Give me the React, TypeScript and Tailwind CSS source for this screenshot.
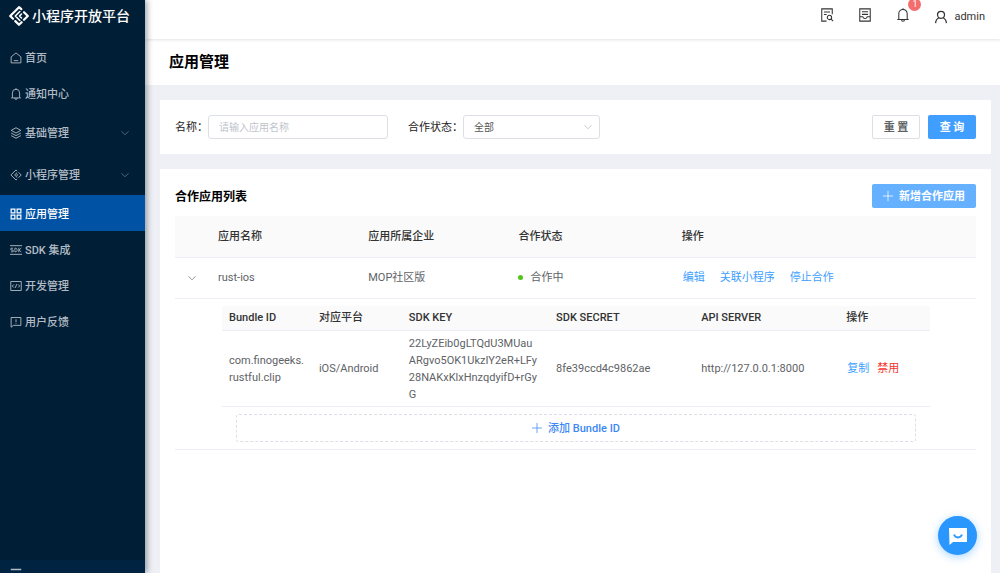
import type { ReactNode } from "react";

type IconProps = { className?: string; children: ReactNode; strokeWidth?: number };

function Icon({ className = "size-3", children, strokeWidth = 1.2 }: IconProps) {
  return (
    <svg
      viewBox="0 0 16 16"
      className={`shrink-0 ${className}`}
      fill="none"
      stroke="currentColor"
      strokeWidth={strokeWidth}
      aria-hidden="true"
    >
      {children}
    </svg>
  );
}

const chevron = <path d="M1 4.500l7 7 7-7" />;
const plus = <path d="M8 0v16M0 8h16" />;

const icons = {
  home: (
    <>
      <path d="M1.500 6.500L8 1.200l6.500 5.300V14.500H1.500z" strokeLinejoin="round" />
      <path d="M5 11.500h6" />
    </>
  ),
  bell: (
    <>
      <path d="M1.500 13.200h13M3.200 13V6.500a4.800 4.800 0 0 1 9.600 0V13" />
      <path d="M6.300 13.500a1.700 1.700 0 0 0 3.400 0M8 .3v1.500" />
    </>
  ),
  layers: (
    <>
      <path d="M8 1l6.500 3.500L8 8 1.500 4.500z" strokeLinejoin="round" />
      <path d="M1.500 8L8 11.500 14.500 8M1.500 11.500L8 15l6.500-3.500" strokeLinejoin="round" />
    </>
  ),
  program: (
    <>
      <path d="M9.500 2.500L8 1.300 1.200 8 8 14.700l1.500-1.200M11.500 4.500L14.900 8l-3.400 3.500" strokeLinejoin="round" />
      <path d="M9.500 4.800L6.200 8l3.300 3.200M9.500 6.500v3" />
    </>
  ),
  grid: (
    <path d="M1.500 1.500h5v5h-5zM9.500 1.500h5v5h-5zM1.500 9.500h5v5h-5zM9.500 9.500h5v5h-5z" strokeWidth="1.600" />
  ),
  sdk: (
    <>
      <path d="M0 2.200h16M0 13.800h16" />
      <path d="M4.200 5.600H1.200V8h3v2.400h-3M6.500 5.600v4.800h1.700l1.200-1.200V6.800L8.200 5.600zM11.700 5v6M15 5.300L12 8l3 2.700" strokeWidth="1.100" />
    </>
  ),
  code: (
    <>
      <path d="M1 2h14v12H1z" />
      <path d="M5 6L3 8l2 2M11 6l2 2-2 2M9 5.500l-2 5" />
    </>
  ),
  feedback: (
    <>
      <path d="M1.500 2h13v10.500H4.500l-3 2.500z" />
      <path d="M8 4.500v3.500M8 9v1.200" />
    </>
  ),
};

type MenuItem = { label: string; icon: ReactNode; submenu?: boolean; active?: boolean };

const menu: MenuItem[] = [
  { label: "首页", icon: icons.home },
  { label: "通知中心", icon: icons.bell },
  { label: "基础管理", icon: icons.layers, submenu: true },
  { label: "小程序管理", icon: icons.program, submenu: true },
  { label: "应用管理", icon: icons.grid, active: true },
  { label: "SDK 集成", icon: icons.sdk },
  { label: "开发管理", icon: icons.code },
  { label: "用户反馈", icon: icons.feedback },
];

const sdkKeyLines = ["22LyZEib0gLTQdU3MUau", "ARgvo5OK1UkzIY2eR+LFy", "28NAKxKlxHnzqdyifD+rGy", "G"];

function Sidebar() {
  return (
    <aside className="z-20 flex w-[145px] shrink-0 flex-col bg-[#001e35] text-[#b3bcc5] shadow-[2px_0_6px_rgba(0,21,41,0.4)]">
      <div className="flex h-[39px] items-start gap-[3px] pt-1.5 pl-[9px] text-white">
        <svg viewBox="0 0 20 20" className="size-5 shrink-0" fill="none" stroke="currentColor" strokeWidth="2.200" strokeLinejoin="round" strokeLinecap="round" aria-hidden="true">
          <path d="M12.300 3.200L10 1.200 1.200 10 4 12.800M6.300 15.100L10 18.800l2.600-2.600M15 6.200l3.800 3.800-3.800 3.800" />
          <path d="M10.800 5.500L6.300 10l4.500 4.500M12.500 8L10.500 10l2 2" strokeWidth="1.600" />
        </svg>
        <span className="text-sm font-medium whitespace-nowrap">小程序开放平台</span>
      </div>
      <nav className="flex-1">
        <ul>
          {menu.map((item) => (
            <li key={item.label}>
              <a
                href="#"
                className={`flex items-center gap-[3px] pt-0.5 pr-4 pl-2.5 font-medium ${item.submenu ? "h-[42px]" : "h-9"} ${item.active ? "bg-[#0053a4] text-white" : ""}`}
              >
                <Icon>{item.icon}</Icon>
                <span className="flex-1">{item.label}</span>
                {item.submenu && (
                  <Icon className="size-2 opacity-60" strokeWidth={1.6}>
                    {chevron}
                  </Icon>
                )}
              </a>
            </li>
          ))}
        </ul>
      </nav>
      <button type="button" aria-label="收起菜单" className="h-[13px] overflow-hidden bg-[#002342] pt-2 pl-2.5">
        <Icon strokeWidth={2}>
          <path d="M1 2h14M1 8h14M1 14h14" />
        </Icon>
      </button>
    </aside>
  );
}

function Header() {
  return (
    <header className="z-10 flex h-[39px] shrink-0 items-start justify-end gap-6 bg-white pt-2 pr-[15px] text-[#333] shadow-[0_1px_3px_rgba(0,21,41,0.12)]">
      <button type="button" aria-label="搜索文档">
        <Icon className="size-3.5">
          <path d="M14 7V1H2v14h5.500M4.500 4.500h7M4.500 7.500h3" />
          <circle cx="10.800" cy="10.800" r="2.500" />
          <path d="M12.700 12.700L15 15" />
        </Icon>
      </button>
      <button type="button" aria-label="文档">
        <Icon className="size-3.5">
          <path d="M2 1h12v14H2zM4.500 4.300h7M4.500 7.300h7M2 10h3.500c.3 1.500 1.200 2 2.500 2s2.200-.5 2.500-2H14" />
        </Icon>
      </button>
      <button type="button" aria-label="通知" className="relative">
        <Icon className="size-3.5">{icons.bell}</Icon>
        <span className="absolute -top-2.5 left-3 flex size-[13px] items-end justify-center rounded-full bg-[#f56c6c] pb-0.5 text-[9px] leading-[9px] text-white">
          1
        </span>
      </button>
      <button type="button" className="flex items-center gap-1.5">
        <Icon className="size-3.5" strokeWidth={1.4}>
          <circle cx="8" cy="5.500" r="4" />
          <path d="M1.800 15c.3-3.500 1.700-5.300 3.900-6.200M14.200 15c-.3-3.500-1.700-5.300-3.900-6.200" />
        </Icon>
        <span>admin</span>
      </button>
    </header>
  );
}

function Filters() {
  return (
    <form className="flex items-center bg-white px-[15px] py-[15px]" onSubmit={(e) => e.preventDefault()}>
      <label htmlFor="app-name" className="text-[#222]">名称：</label>
      <input
        id="app-name"
        placeholder="请输入应用名称"
        className="h-6 w-[180px] rounded-[3px] border border-[#dcdfe6] px-2.5 text-[10px] outline-none placeholder:text-[#c0c4cc]"
      />
      <label htmlFor="app-status" className="ml-5 text-[#222]">合作状态：</label>
      <div className="relative">
        <select
          id="app-status"
          className="h-6 w-[137px] appearance-none rounded-[3px] border border-[#dcdfe6] bg-white px-2.5 text-[10px] text-[#555] outline-none"
        >
          <option>全部</option>
        </select>
        <Icon className="pointer-events-none absolute top-2 right-2 size-2 text-[#c0c4cc]" strokeWidth={1.8}>
          {chevron}
        </Icon>
      </div>
      <div className="ml-auto flex gap-2">
        <button type="reset" className="h-6 w-12 rounded-[2px] border border-[#dcdfe6] font-semibold text-[#606266]">
          重 置
        </button>
        <button type="submit" className="h-6 w-12 rounded-[2px] bg-[#409eff] font-semibold text-white">
          查 询
        </button>
      </div>
    </form>
  );
}

function BundleTable() {
  return (
    <div className="mr-[46px] ml-[47px] pt-[7px] pb-[7px]">
      <table className="w-full table-fixed text-left">
        <colgroup>
          <col className="w-[12.700%]" />
          <col className="w-[12.700%]" />
          <col className="w-[20.800%]" />
          <col className="w-[20.500%]" />
          <col className="w-[20.500%]" />
          <col />
        </colgroup>
        <thead className="bg-[#fafafa] text-[#333]">
          <tr className="h-[25px] border-b border-[#ebeef5]">
            {["Bundle ID", "对应平台", "SDK KEY", "SDK SECRET", "API SERVER", "操作"].map((h) => (
              <th key={h} className="px-[7px] font-medium">{h}</th>
            ))}
          </tr>
        </thead>
        <tbody>
          <tr className="h-[76px] border-b border-[#ebeef5]">
            <td className="px-[7px]">com.finogeeks.<wbr />rustful.clip</td>
            <td className="px-[7px]">iOS/Android</td>
            <td className="px-[7px]">
              {sdkKeyLines.map((line) => (
                <span key={line} className="block">{line}</span>
              ))}
            </td>
            <td className="px-[7px]">8fe39ccd4c9862ae</td>
            <td className="px-[7px]">http://127.0.0.1:8000</td>
            <td className="px-2">
              <div className="flex gap-2 whitespace-nowrap">
                <button type="button" className="text-[#409eff]">复制</button>
                <button type="button" className="text-[#f5342c]">禁用</button>
              </div>
            </td>
          </tr>
        </tbody>
      </table>
      <div className="px-3.5 pt-[7px]">
        <button
          type="button"
          className="flex h-7 w-full items-center justify-center gap-1.5 rounded-[3px] border border-dashed border-[#dcdfe6] font-medium text-[#3c88f5]"
        >
          <Icon className="size-2.5">{plus}</Icon>
          添加 Bundle ID
        </button>
      </div>
    </div>
  );
}

function AppList() {
  return (
    <section className="flex-1 bg-white px-[15px] pt-[15px]">
      <div className="flex items-center justify-between">
        <h2 className="pt-0.5 text-xs font-semibold text-black">合作应用列表</h2>
        <button type="button" className="flex h-6 items-center gap-1.5 rounded-[2px] bg-[#66b1ff] px-[11px] font-semibold text-white">
          <Icon className="size-2.5">{plus}</Icon>
          新增合作应用
        </button>
      </div>
      <table className="mt-2 w-full table-fixed text-left">
        <colgroup>
          <col className="w-[4.500%]" />
          <col className="w-[18.750%]" />
          <col className="w-[18.750%]" />
          <col className="w-[20.400%]" />
          <col />
        </colgroup>
        <thead className="bg-[#fafafa] text-[#333]">
          <tr className="h-[41px] border-b border-[#ebeef5]">
            <th aria-label="展开" />
            {["应用名称", "应用所属企业", "合作状态", "操作"].map((h) => (
              <th key={h} className="px-[7px] font-medium">{h}</th>
            ))}
          </tr>
        </thead>
        <tbody>
          <tr className="h-[41px] border-b border-[#ebeef5]">
            <td>
              <button type="button" aria-label="收起" className="ml-[13px] flex text-[#777]">
                <Icon className="size-2" strokeWidth={1.6}>{chevron}</Icon>
              </button>
            </td>
            <td className="px-[7px]">rust-ios</td>
            <td className="px-[7px]">MOP社区版</td>
            <td className="px-[7px]">
              <span className="flex items-center gap-[7px]">
                <span className="size-[5px] rounded-full bg-[#52c41a]" />
                合作中
              </span>
            </td>
            <td className="px-2">
              <div className="flex gap-[15px] text-[#409eff]">
                <button type="button">编辑</button>
                <button type="button">关联小程序</button>
                <button type="button">停止合作</button>
              </div>
            </td>
          </tr>
          <tr className="border-b border-[#ebeef5]">
            <td colSpan={5}>
              <BundleTable />
            </td>
          </tr>
        </tbody>
      </table>
    </section>
  );
}

export default function App() {
  return (
    <div className="flex h-screen overflow-hidden bg-[#eff0f5] font-['Roboto','Noto_Sans_CJK_SC',sans-serif] text-[11px] leading-[17px] text-[#606266]">
      <Sidebar />
      <div className="flex min-w-0 flex-1 flex-col">
        <Header />
        <div className="flex h-[46px] shrink-0 items-center bg-white px-6">
          <h1 className="text-[15px] font-semibold text-black">应用管理</h1>
        </div>
        <main className="flex flex-1 flex-col gap-[15px] pt-[15px] pr-[9px] pl-[15px]">
          <Filters />
          <AppList />
        </main>
      </div>
      <button
        type="button"
        aria-label="在线客服"
        className="fixed right-[23px] bottom-[18px] z-30 flex size-[39px] items-center justify-center rounded-full bg-[#2a97ff] shadow-[0_2px_8px_rgba(42,151,255,0.4)]"
      >
        <svg viewBox="0 0 18 18" className="size-[18px]" aria-hidden="true">
          <path d="M0 1h18v14H4l-3.500 3z" fill="#fff" />
          <path d="M5 7.500c1.500 4 6.500 4 8 0" fill="none" stroke="#2a97ff" strokeWidth="1.800" />
        </svg>
      </button>
    </div>
  );
}
